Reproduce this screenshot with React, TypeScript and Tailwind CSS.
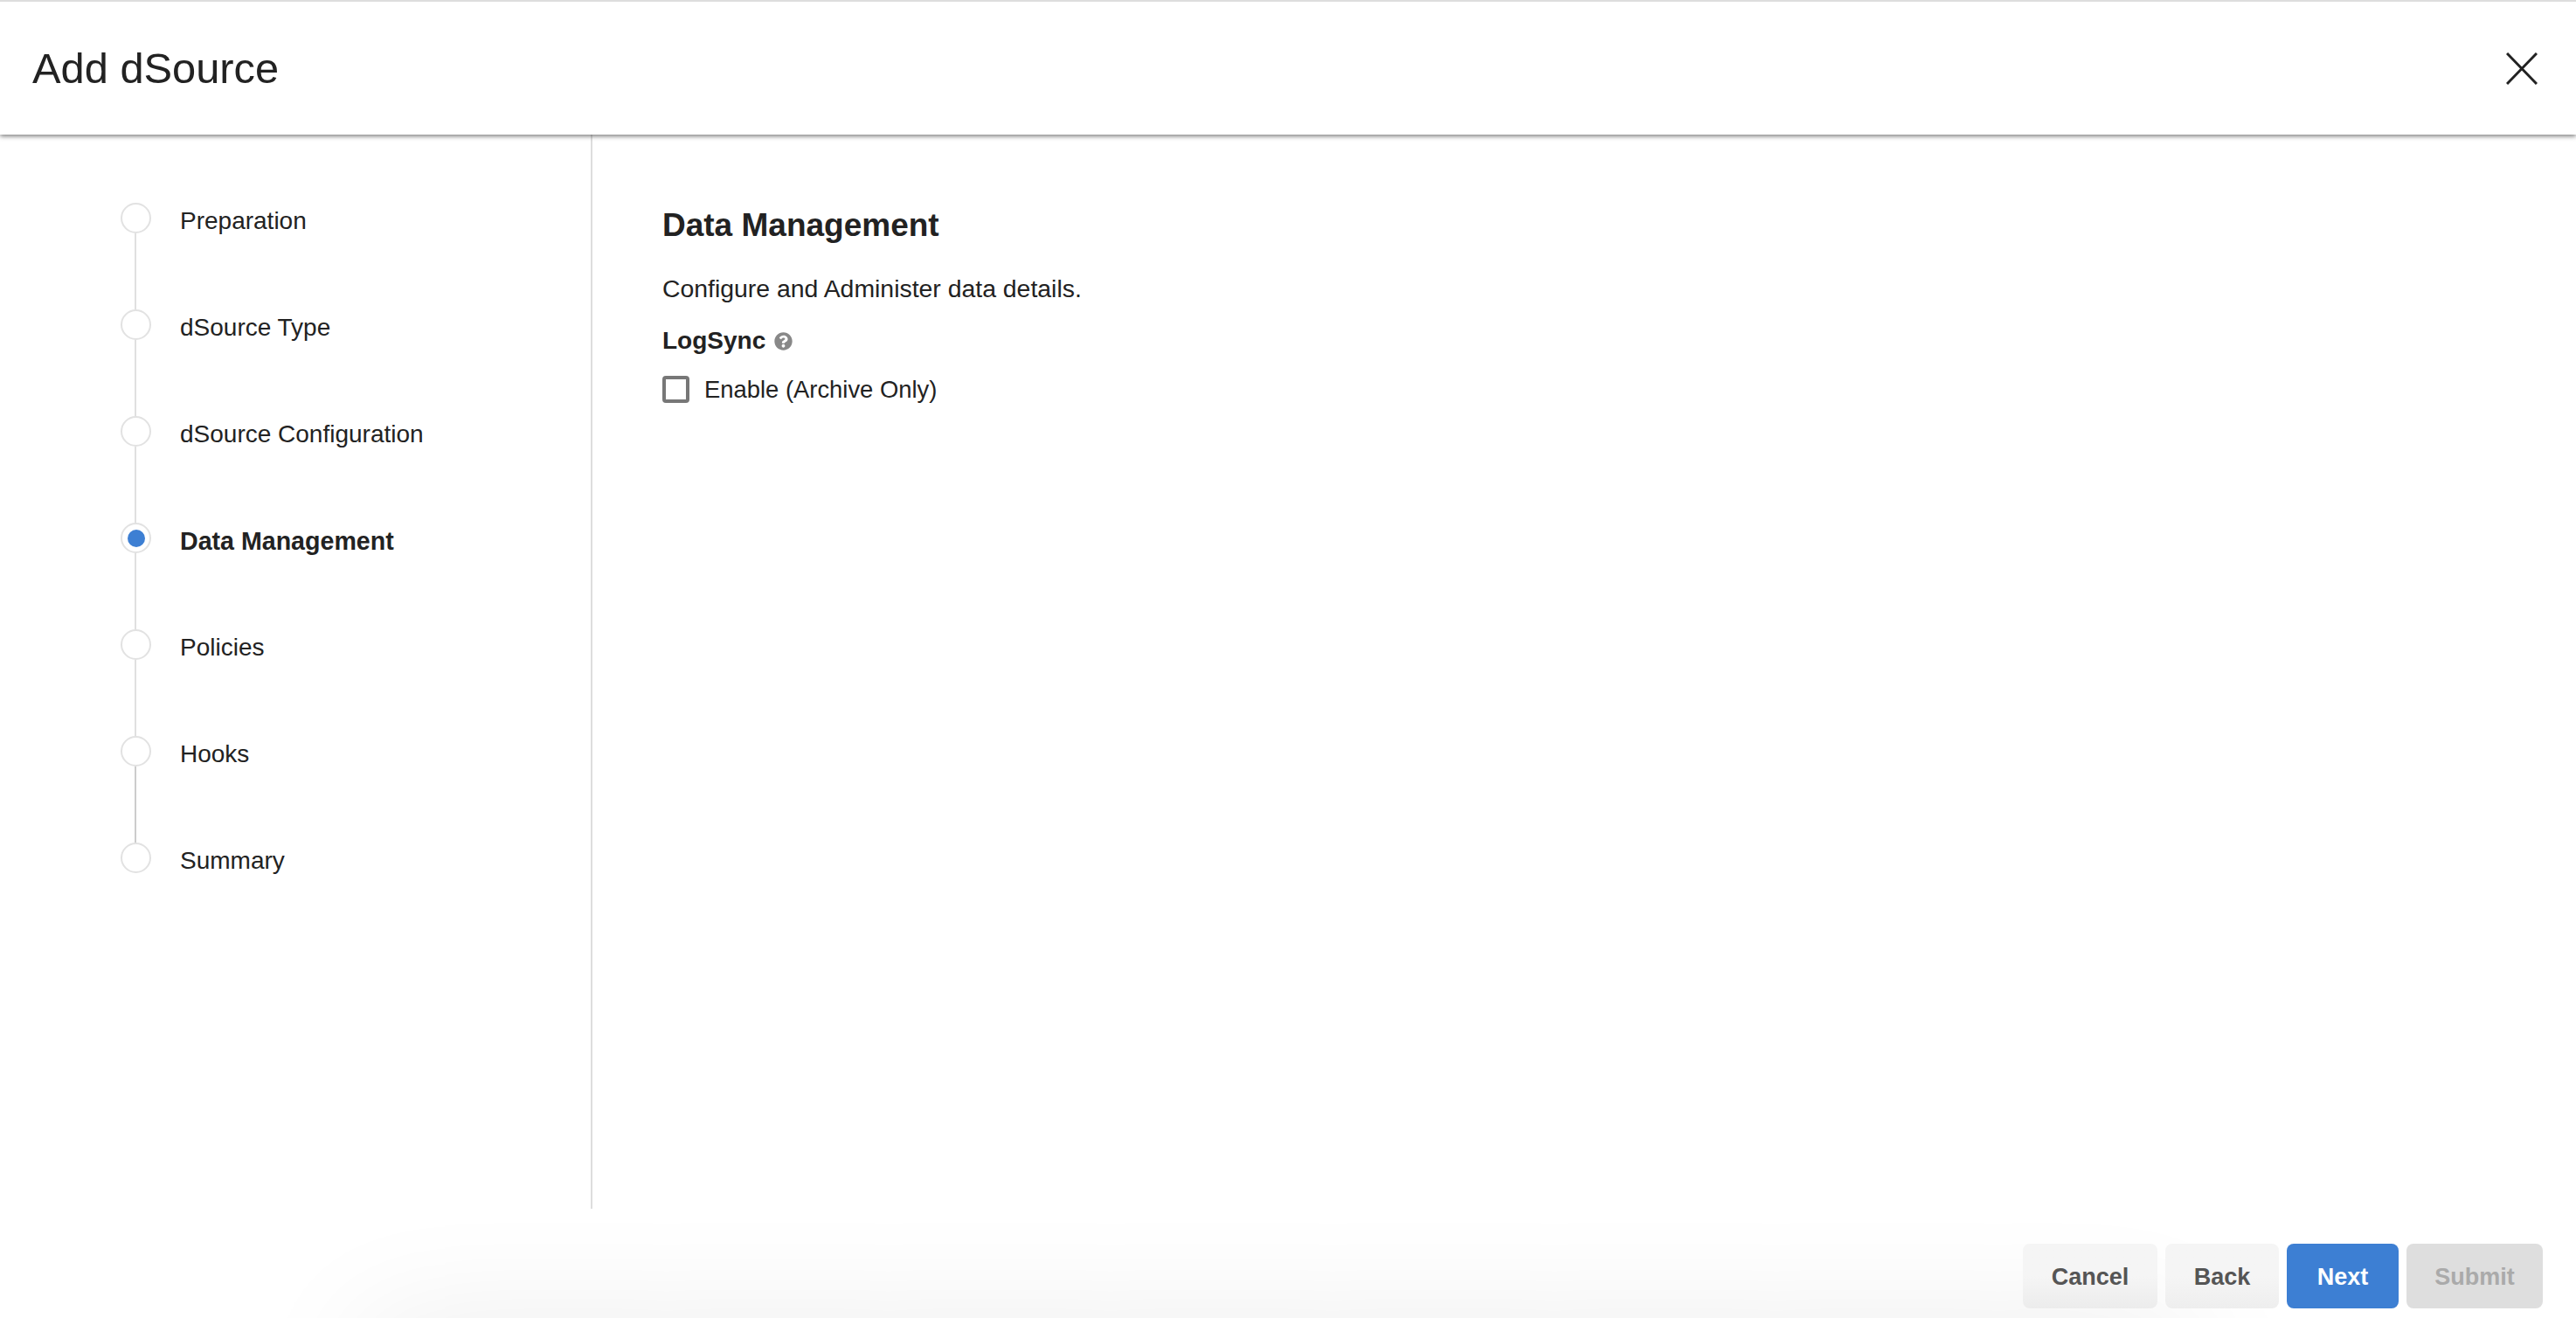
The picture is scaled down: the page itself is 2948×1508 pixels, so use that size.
import { FaQuestionCircle } from 'react-icons/fa';

const steps = ['Preparation', 'dSource Type', 'dSource Configuration', 'Data Management', 'Policies', 'Hooks', 'Summary'];
const activeStep = 'Data Management';

function Step({ label, index }: { label: string; index: number }) {
    const active = label === activeStep;
    const last = index === steps.length - 1;
    return (
        <li className="flex h-[122px]">
            <div className="flex w-[35px] flex-col items-center pr-px">
                <div className="ml-px flex h-[35px] w-[35px] shrink-0 items-center justify-center rounded-full border-2 border-[#e2e2e2] bg-white">
                    {active && <div className="h-[20px] w-[20px] rounded-full bg-[#3d7fd3]" />}
                </div>
                {!last && <div className={`w-[2px] flex-1 ${index === 5 ? 'bg-[#cccccc]' : 'bg-[#e0e0e0]'}`} />}
            </div>
            <span className={`ml-[33px] mt-[3px] leading-[36px] text-[#222222] ${active ? 'text-[28.6px] font-bold' : 'text-[28px]'}`}>
                {label}
            </span>
        </li>
    );
}

export default function App() {
    return (
        <div className="relative flex h-[1508px] w-full flex-col overflow-hidden bg-white font-['Liberation_Sans',Arial,sans-serif]">
            <div className="absolute left-[420px] top-[1522px] h-[200px] w-[2085px] shadow-[0_0_150px_rgba(0,0,0,0.09)]" />
            <header className="relative z-10 flex h-[154px] shrink-0 items-center justify-between border-t-2 border-[#dddddd] bg-white pl-[37px] pr-[44px] shadow-[0_2px_5px_rgba(0,0,0,0.5)]">
                <h1 className="text-[48.8px] font-normal leading-none text-[#222222]">Add dSource</h1>
                <button aria-label="Close">
                    <svg width="36" height="37" viewBox="0 0 36 37" className="block">
                        <path d="M1 1 L35 36 M35 1 L1 36" stroke="#222222" strokeWidth="3" fill="none" />
                    </svg>
                </button>
            </header>
            <div className="flex h-[1229px] shrink-0">
                <aside className="w-[678px] shrink-0 border-r-2 border-[#dddddd] pl-[138px] pt-[78px]">
                    <ol>
                        {steps.map((step, i) => (
                            <Step key={step} label={step} index={i} />
                        ))}
                    </ol>
                </aside>
                <main className="pl-[80px] pt-[84px] text-[#222222]">
                    <h2 className="text-[37px] font-bold leading-[40px]">Data Management</h2>
                    <p className="mt-[34px] text-[28.4px] leading-[36px]">Configure and Administer data details.</p>
                    <div className="mt-[24px] flex items-center">
                        <span className="text-[28px] font-bold leading-[36px]">LogSync</span>
                        <FaQuestionCircle className="ml-[10px] text-[21px] text-[#888888]" />
                    </div>
                    <label className="mt-[22px] flex items-center">
                        <span className="h-[31px] w-[31px] rounded-[4px] border-[4px] border-[#777777] bg-white" />
                        <span className="ml-[17px] text-[27.4px] leading-[31px]">Enable (Archive Only)</span>
                    </label>
                </main>
            </div>
            <footer className="relative flex flex-1 items-start justify-end gap-[9px] pr-[38px] pt-[40px]">
                <button className="h-[74px] w-[154px] rounded-[8px] bg-gradient-to-b from-[#f5f5f5] from-50% to-[#ececec] pt-[3px] text-[27px] font-bold text-[#555555]">
                    Cancel
                </button>
                <button className="h-[74px] w-[130px] rounded-[8px] bg-gradient-to-b from-[#f5f5f5] from-50% to-[#eeeeee] pt-[3px] text-[27px] font-bold text-[#555555]">
                    Back
                </button>
                <button className="h-[74px] w-[128px] rounded-[8px] bg-[#3d7fd3] pt-[3px] text-[27px] font-bold text-white">Next</button>
                <button className="h-[74px] w-[156px] rounded-[8px] bg-[#dedede] pt-[3px] text-[27px] font-bold text-[#aaaaaa]">Submit</button>
            </footer>
        </div>
    );
}
